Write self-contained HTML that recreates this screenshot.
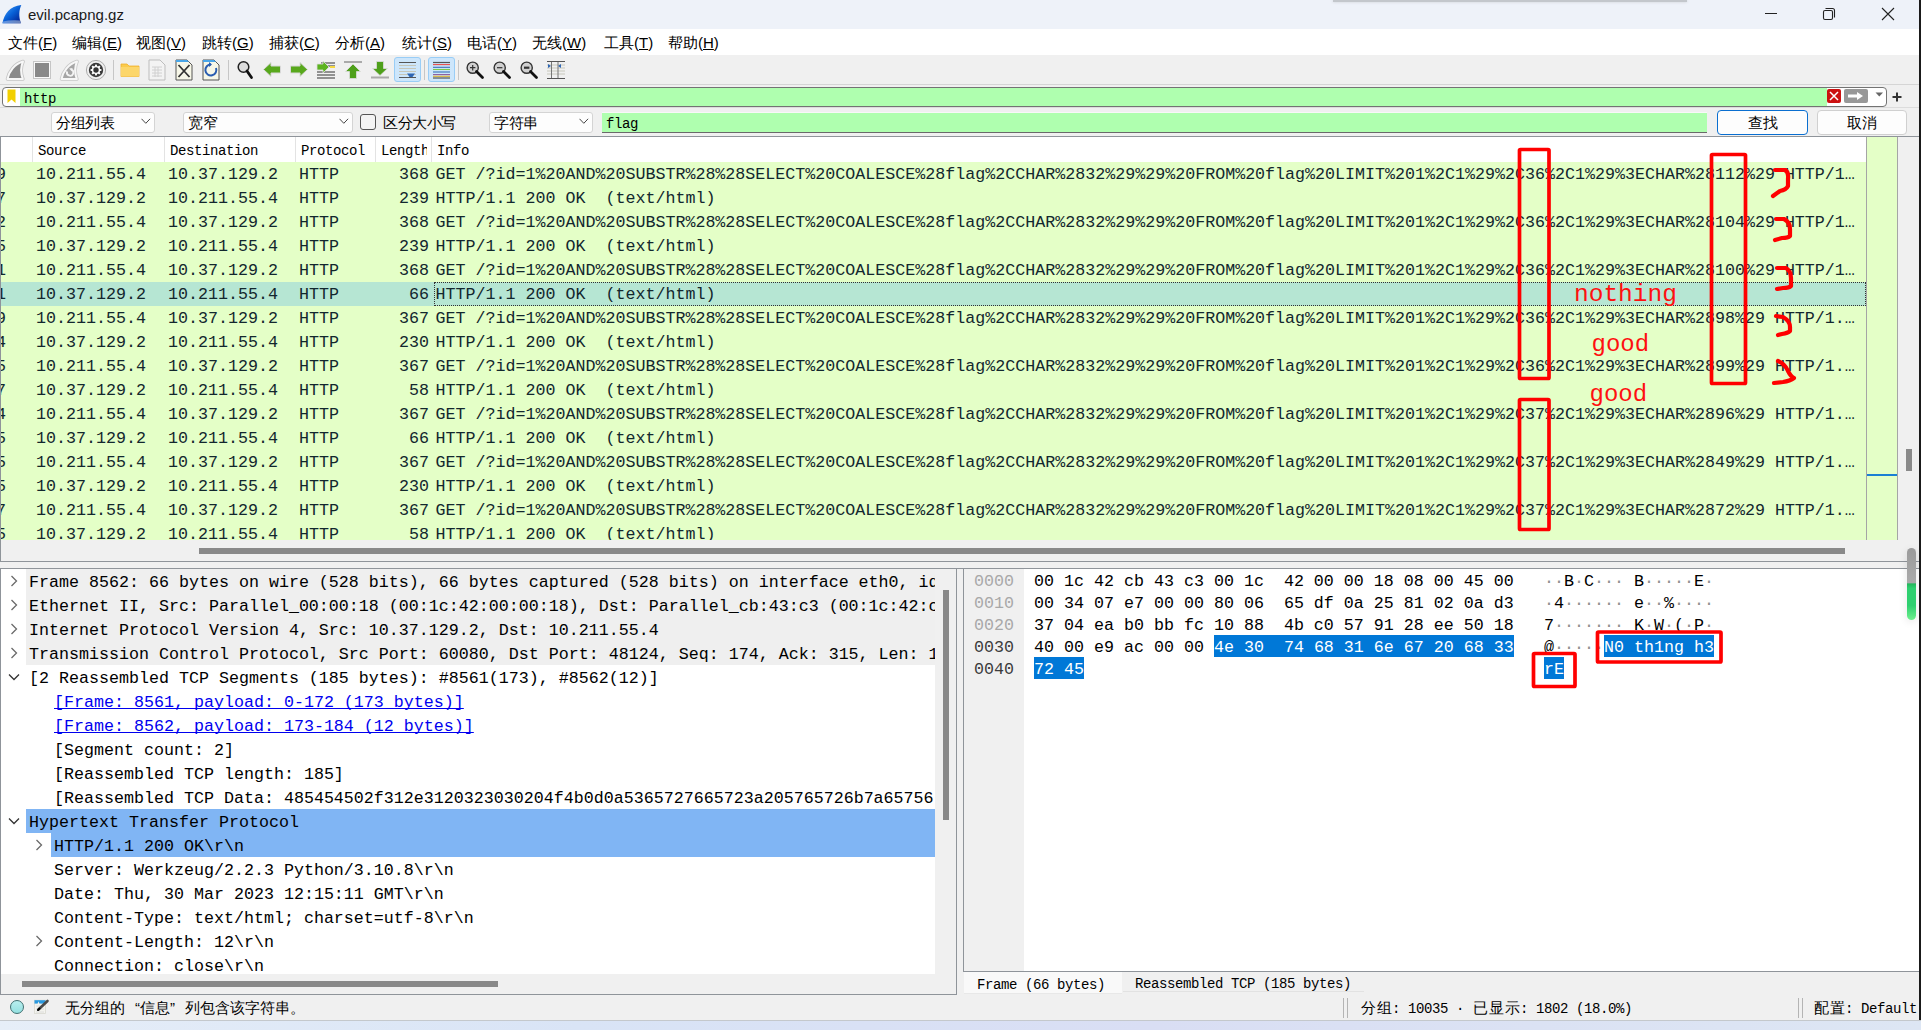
<!DOCTYPE html><html><head><meta charset="utf-8"><style>
*{box-sizing:border-box}
html,body{margin:0;padding:0}
body{width:1921px;height:1030px;position:relative;overflow:hidden;background:#f0f0f0;font-family:"Liberation Sans",sans-serif;color:#000}
.ab{position:absolute}
.m{text-decoration-skip-ink:none;font-family:"Liberation Mono",monospace;font-size:16.67px;white-space:pre;line-height:24px}
.s{font-family:"Liberation Mono",monospace;font-size:14px;letter-spacing:-0.4px;white-space:pre}
.cj{display:inline-block;width:16px;text-align:center;font-size:15px;letter-spacing:0}
.menu{font-family:"Liberation Sans",sans-serif;font-size:15px;white-space:pre}
</style></head><body>

<div class="ab" style="left:0;top:0;width:1921px;height:29px;background:#eef2f9"></div>
<div class="ab" style="left:1333px;top:0;width:354px;height:2px;background:#c3c7cc;box-shadow:0 0 3px #c8ccd0"></div>
<svg class="ab" style="left:0;top:0" width="30" height="29" viewBox="0 0 30 29">
<defs><linearGradient id="sg" x1="0.2" y1="0.1" x2="0.9" y2="0.85"><stop offset="0" stop-color="#3c92f0"/><stop offset="0.45" stop-color="#0862d8"/><stop offset="1" stop-color="#03289a"/></linearGradient>
<linearGradient id="sb" x1="0" y1="0" x2="1" y2="0"><stop offset="0" stop-color="#5e96e6"/><stop offset="1" stop-color="#6c82b8"/></linearGradient></defs>
<path d="M2.5,23.3 C4,14 10,6 21.3,5 C19,10 18.5,16 20.8,23.3 Z" fill="url(#sg)"/>
<path d="M2.9,21.6 Q10,19.8 20.3,20.6 L20.8,23.3 L2.5,23.3 Z" fill="url(#sb)"/></svg>
<div class="ab menu" style="left:28px;top:6px;font-size:15px;color:#1a1a1a">evil.pcapng.gz</div>
<div class="ab" style="left:1765px;top:13px;width:12px;height:1px;background:#222"></div>
<svg class="ab" style="left:1822px;top:7px" width="14" height="14" viewBox="0 0 14 14" fill="none" stroke="#222" stroke-width="1.1">
<rect x="1.5" y="3.5" width="9" height="9" rx="1.5"/><path d="M3.5,1.5 H10.5 Q12.5,1.5 12.5,3.5 V10.5"/></svg>
<svg class="ab" style="left:1881px;top:7px" width="14" height="14" viewBox="0 0 14 14" stroke="#222" stroke-width="1.1">
<path d="M1,1 L13,13 M13,1 L1,13"/></svg>
<div class="ab" style="left:0;top:29px;width:1919px;height:26px;background:#fff"></div>
<div class="ab menu" style="left:8px;top:34px;line-height:18px"><span class="cj" style="width:15px;text-align:center">文</span><span class="cj" style="width:15px;text-align:center">件</span>(<u>F</u>)</div>
<div class="ab menu" style="left:72px;top:34px;line-height:18px"><span class="cj" style="width:15px;text-align:center">编</span><span class="cj" style="width:15px;text-align:center">辑</span>(<u>E</u>)</div>
<div class="ab menu" style="left:136px;top:34px;line-height:18px"><span class="cj" style="width:15px;text-align:center">视</span><span class="cj" style="width:15px;text-align:center">图</span>(<u>V</u>)</div>
<div class="ab menu" style="left:202px;top:34px;line-height:18px"><span class="cj" style="width:15px;text-align:center">跳</span><span class="cj" style="width:15px;text-align:center">转</span>(<u>G</u>)</div>
<div class="ab menu" style="left:269px;top:34px;line-height:18px"><span class="cj" style="width:15px;text-align:center">捕</span><span class="cj" style="width:15px;text-align:center">获</span>(<u>C</u>)</div>
<div class="ab menu" style="left:335px;top:34px;line-height:18px"><span class="cj" style="width:15px;text-align:center">分</span><span class="cj" style="width:15px;text-align:center">析</span>(<u>A</u>)</div>
<div class="ab menu" style="left:402px;top:34px;line-height:18px"><span class="cj" style="width:15px;text-align:center">统</span><span class="cj" style="width:15px;text-align:center">计</span>(<u>S</u>)</div>
<div class="ab menu" style="left:467px;top:34px;line-height:18px"><span class="cj" style="width:15px;text-align:center">电</span><span class="cj" style="width:15px;text-align:center">话</span>(<u>Y</u>)</div>
<div class="ab menu" style="left:532px;top:34px;line-height:18px"><span class="cj" style="width:15px;text-align:center">无</span><span class="cj" style="width:15px;text-align:center">线</span>(<u>W</u>)</div>
<div class="ab menu" style="left:604px;top:34px;line-height:18px"><span class="cj" style="width:15px;text-align:center">工</span><span class="cj" style="width:15px;text-align:center">具</span>(<u>T</u>)</div>
<div class="ab menu" style="left:668px;top:34px;line-height:18px"><span class="cj" style="width:15px;text-align:center">帮</span><span class="cj" style="width:15px;text-align:center">助</span>(<u>H</u>)</div>
<div class="ab" style="left:0;top:55px;width:1919px;height:30px;background:#f0f0f0"></div>
<div class="ab" style="left:0;top:84px;width:1919px;height:1px;background:#d5d5d5"></div>
<svg class="ab" style="left:5px;top:59px" width="20" height="22" viewBox="0 0 20 22" ><path d="M2.5,20 C4,12.5 9.5,5 18,2.5 C15.8,7.5 15.3,13.5 17.8,20 Z" fill="none" stroke="#c4c4c4" stroke-width="3.6" stroke-linejoin="round"/><path d="M2.5,20 C4,12.5 9.5,5 18,2.5 C15.8,7.5 15.3,13.5 17.8,20 Z" fill="#8a8a8a" stroke="#f7f7f7" stroke-width="2" stroke-linejoin="round"/></svg>
<svg class="ab" style="left:32px;top:60px" width="20" height="20" viewBox="0 0 20 20" ><rect x="1.5" y="1.5" width="17" height="17" fill="#f8f8f8" stroke="#c6c6c6"/><rect x="3" y="3" width="14" height="14" fill="#888"/></svg>
<svg class="ab" style="left:59px;top:59px" width="20" height="22" viewBox="0 0 20 22" ><path d="M2.5,20 C4,12.5 9.5,5 18,2.5 C15.8,7.5 15.3,13.5 17.8,20 Z" fill="none" stroke="#c8c8c8" stroke-width="3.6" stroke-linejoin="round"/><path d="M2.5,20 C4,12.5 9.5,5 18,2.5 C15.8,7.5 15.3,13.5 17.8,20 Z" fill="#a6a6a6" stroke="#f7f7f7" stroke-width="2" stroke-linejoin="round"/><path d="M8.2,12.3 A3.2,3.2 0 1 0 12.5,10.6" fill="none" stroke="#f4f4f4" stroke-width="1.8"/><path d="M10.2,9.5 L13.6,9 L12.6,12.3 Z" fill="#f4f4f4"/></svg>
<svg class="ab" style="left:85px;top:59px" width="22" height="22" viewBox="0 0 22 22" ><circle cx="11" cy="11" r="9.6" fill="none" stroke="#ababab" stroke-width="1"/><circle cx="11" cy="11" r="7.2" fill="#3a3a3a"/><circle cx="11" cy="11" r="4.1" fill="#fff"/><rect x="10.05" y="5.6" width="1.9" height="2.2" fill="#fff" transform="rotate(0 11 11)"/><rect x="10.05" y="5.6" width="1.9" height="2.2" fill="#fff" transform="rotate(45 11 11)"/><rect x="10.05" y="5.6" width="1.9" height="2.2" fill="#fff" transform="rotate(90 11 11)"/><rect x="10.05" y="5.6" width="1.9" height="2.2" fill="#fff" transform="rotate(135 11 11)"/><rect x="10.05" y="5.6" width="1.9" height="2.2" fill="#fff" transform="rotate(180 11 11)"/><rect x="10.05" y="5.6" width="1.9" height="2.2" fill="#fff" transform="rotate(225 11 11)"/><rect x="10.05" y="5.6" width="1.9" height="2.2" fill="#fff" transform="rotate(270 11 11)"/><rect x="10.05" y="5.6" width="1.9" height="2.2" fill="#fff" transform="rotate(315 11 11)"/><circle cx="11" cy="11" r="2.7" fill="#333"/></svg>
<div class="ab" style="left:113px;top:60px;width:1px;height:20px;background:#c6c6c6"></div>
<div class="ab" style="left:228px;top:60px;width:1px;height:20px;background:#c6c6c6"></div>
<div class="ab" style="left:424px;top:60px;width:1px;height:20px;background:#c6c6c6"></div>
<div class="ab" style="left:458px;top:60px;width:1px;height:20px;background:#c6c6c6"></div>
<svg class="ab" style="left:120px;top:62px" width="20" height="16" viewBox="0 0 20 16" ><path d="M1,2 H7 L9,4 H19 V14.5 H1 Z" fill="#fbcb4c" stroke="#f0b030" stroke-width="0.8"/><rect x="1" y="5" width="18" height="9.5" fill="#fcd66a"/></svg>
<svg class="ab" style="left:148px;top:59px" width="18" height="22" viewBox="0 0 18 22" ><path d="M1,1 H12 L17,6 V21 H1 Z" fill="#f3f3f3" stroke="#bdbdbd"/><path d="M4,8 H14 M4,11 H14 M4,14 H14 M4,17 H14 M7,8 V18 M10,8 V18" stroke="#d0d0d0" stroke-width="1"/></svg>
<svg class="ab" style="left:175px;top:59px" width="18" height="22" viewBox="0 0 18 22" ><path d="M1,1 H12 L17,6 V21 H1 Z" fill="#f7f7e8" stroke="#555"/><path d="M1,1 H12 L14,3 H1 Z" fill="#4aa6e8"/><path d="M3.5,6 L14.5,18 M14.5,6 L3.5,18" stroke="#333" stroke-width="1.8"/></svg>
<svg class="ab" style="left:202px;top:59px" width="18" height="22" viewBox="0 0 18 22" ><path d="M1,1 H12 L17,6 V21 H1 Z" fill="#f7f7e8" stroke="#555"/><path d="M1,1 H12 L14,3 H1 Z" fill="#4aa6e8"/><path d="M9,5.5 A5.5,5.5 0 1 0 14,9" fill="none" stroke="#2a5db0" stroke-width="2"/><path d="M7,3 L10,5.5 L7,8 Z" fill="#2a5db0"/></svg>
<svg class="ab" style="left:237px;top:60px" width="17" height="20" viewBox="0 0 17 20" ><circle cx="6.5" cy="7" r="5.3" fill="#ddd" stroke="#222" stroke-width="1.5"/><path d="M10,11 L14.5,17.5" stroke="#111" stroke-width="2.8" stroke-linecap="round"/></svg>
<svg class="ab" style="left:262px;top:61px" width="20" height="17" viewBox="0 0 20 17" ><path d="M1.5,8.5 L9,1.5 V5 H18.5 V12 H9 V15.5 Z" fill="#58a81c" stroke="#d8d8d8" stroke-width="1"/></svg>
<svg class="ab" style="left:289px;top:61px" width="20" height="17" viewBox="0 0 20 17" ><path d="M18.5,8.5 L11,1.5 V5 H1.5 V12 H11 V15.5 Z" fill="#58a81c" stroke="#d8d8d8" stroke-width="1"/></svg>
<svg class="ab" style="left:315px;top:59px" width="22" height="22" viewBox="0 0 22 22" ><path d="M6,4 H20 M6,7 H20 M2,13 H20 M2,16 H20 M2,19 H20" stroke="#333" stroke-width="1.2"/><path d="M15,8 H20" stroke="#f5d742" stroke-width="2"/><path d="M14,8 L8,2 V5 H2 V11 H8 V14 Z" fill="#5cb320" stroke="#ddd" stroke-width="0.8"/></svg>
<svg class="ab" style="left:343px;top:60px" width="20" height="20" viewBox="0 0 20 20" ><rect x="1" y="1" width="18" height="2" fill="#aaa"/><path d="M10,4 L17.5,11.5 H13.5 V18.5 H6.5 V11.5 H2.5 Z" fill="#4ea01a" stroke="#ddd" stroke-width="0.8"/></svg>
<svg class="ab" style="left:370px;top:60px" width="20" height="20" viewBox="0 0 20 20" ><rect x="1" y="16.5" width="18" height="2" fill="#aaa"/><path d="M10,15.5 L17.5,8.5 H13.5 V1.5 H6.5 V8.5 H2.5 Z" fill="#4ea01a" stroke="#ddd" stroke-width="0.8"/></svg>
<div class="ab" style="left:394px;top:57px;width:27px;height:25px;background:#cde6fb;border:1px solid #99cdf6;border-radius:3px"></div>
<svg class="ab" style="left:398px;top:61px" width="19" height="18" viewBox="0 0 19 18" ><path d="M1,1.5 H18 M1,16.5 H18" stroke="#555" stroke-width="1.2"/><path d="M1,4.5 H18 M1,7.5 H18 M1,10.5 H18 M1,13.5 H18" stroke="#c6c6b8" stroke-width="1"/><path d="M9,12.5 H17 L14.5,16 H11.5 Z" fill="#2f66b3"/></svg>
<div class="ab" style="left:428px;top:57px;width:27px;height:25px;background:#cde6fb;border:1px solid #99cdf6;border-radius:3px"></div>
<svg class="ab" style="left:432px;top:61px" width="19" height="18" viewBox="0 0 19 18" ><path d="M1,1.5 H18" stroke="#555" stroke-width="1.2"/><path d="M1,3.6 H18" stroke="#e84a4a" stroke-width="1.1"/><path d="M1,6.3 H18" stroke="#3a6fb8" stroke-width="1.1"/><path d="M1,8.5 H18" stroke="#7cc84a" stroke-width="1.1"/><path d="M1,11 H18" stroke="#3a6fb8" stroke-width="1.1"/><path d="M1,13.6 H18" stroke="#8a5aa0" stroke-width="1.1"/><path d="M1,15.3 H18" stroke="#d8b030" stroke-width="1.1"/><path d="M1,17 H18" stroke="#555" stroke-width="1.2"/></svg>
<svg class="ab" style="left:466px;top:61px" width="19" height="19" viewBox="0 0 19 19" ><circle cx="6.7" cy="6.7" r="5.6" fill="#d0d0d0" stroke="#333" stroke-width="1.4"/><path d="M10.5,10.5 L16.5,16.5" stroke="#111" stroke-width="2.8" stroke-linecap="round"/><path d="M4,6.7 H9.4 M6.7,4 V9.4" stroke="#333" stroke-width="1.2"/></svg>
<svg class="ab" style="left:493px;top:61px" width="19" height="19" viewBox="0 0 19 19" ><circle cx="6.7" cy="6.7" r="5.6" fill="#d0d0d0" stroke="#333" stroke-width="1.4"/><path d="M10.5,10.5 L16.5,16.5" stroke="#111" stroke-width="2.8" stroke-linecap="round"/><path d="M4,6.7 H9.4" stroke="#333" stroke-width="1.2"/></svg>
<svg class="ab" style="left:520px;top:61px" width="19" height="19" viewBox="0 0 19 19" ><circle cx="6.7" cy="6.7" r="5.6" fill="#d0d0d0" stroke="#333" stroke-width="1.4"/><path d="M10.5,10.5 L16.5,16.5" stroke="#111" stroke-width="2.8" stroke-linecap="round"/><path d="M4,6.7 H9.4" stroke="#333" stroke-width="2.2"/></svg>
<svg class="ab" style="left:546px;top:60px" width="20" height="20" viewBox="0 0 20 20" ><path d="M1,1.5 H19 M1,18.5 H19" stroke="#555" stroke-width="1.2"/><path d="M1,5 H19 M1,8 H19 M1,11 H19 M1,14 H19" stroke="#c8c8bc" stroke-width="1"/><path d="M5.5,2 V18 M12,2 V18" stroke="#777" stroke-width="1"/><path d="M2,4 L5,6 L2,8 Z M15,4 L12,6 L15,8 Z" fill="#2f66b3"/></svg>
<div class="ab" style="left:2px;top:87px;width:1885px;height:20px;border:1px solid #737373;border-radius:4px;background:#fff;overflow:hidden"><div class="ab" style="left:17px;top:0;width:1807px;height:18px;background:#afffaf"></div></div>
<svg class="ab" style="left:7px;top:89px" width="9" height="15" viewBox="0 0 9 15" ><path d="M0.5,0.5 H8.5 V14 L4.5,10.5 L0.5,14 Z" fill="#f2cf00"/></svg>
<div class="ab s" style="left:24px;top:90px;line-height:18px">http</div>
<div class="ab" style="left:1827px;top:89px;width:14px;height:14px;background:#cc1010;border-radius:2px"></div>
<svg class="ab" style="left:1827px;top:89px" width="14" height="14" viewBox="0 0 14 14" ><path d="M3,3 L11,11 M11,3 L3,11" stroke="#fff" stroke-width="1.5"/></svg>
<div class="ab" style="left:1844px;top:89px;width:24px;height:14px;background:#989898;border-radius:2px"></div>
<svg class="ab" style="left:1844px;top:89px" width="24" height="14" viewBox="0 0 24 14" ><path d="M4,5.5 H13 V3 L19,7 L13,11 V8.5 H4 Z" fill="#fff"/></svg>
<svg class="ab" style="left:1875px;top:92px" width="9" height="6" viewBox="0 0 9 6" ><path d="M0.5,0.5 H8 L4.25,4.5 Z" fill="#666"/></svg>
<svg class="ab" style="left:1892px;top:92px" width="10" height="10" viewBox="0 0 10 10" ><path d="M5,0.5 V9.5 M0.5,5 H9.5" stroke="#333" stroke-width="2"/></svg>
<div class="ab" style="left:0;top:107px;width:1919px;height:1px;background:#dcdcdc"></div>
<div class="ab" style="left:51px;top:112px;width:104px;height:21px;background:#fdfdfd;border:1px solid #d4d4d4;border-radius:3px"></div>
<div class="ab menu" style="left:56px;top:113px;line-height:19px;font-size:15px"><span class="cj" style="width:14.5px;text-align:center">分</span><span class="cj" style="width:14.5px;text-align:center">组</span><span class="cj" style="width:14.5px;text-align:center">列</span><span class="cj" style="width:14.5px;text-align:center">表</span></div>
<svg class="ab" style="left:141px;top:118px" width="10" height="7" viewBox="0 0 10 7" ><path d="M0.5,0.8 L4.8,5.3 L9.1,0.8" fill="none" stroke="#444" stroke-width="1"/></svg>
<div class="ab" style="left:183px;top:112px;width:170px;height:21px;background:#fdfdfd;border:1px solid #d4d4d4;border-radius:3px"></div>
<div class="ab menu" style="left:188px;top:113px;line-height:19px;font-size:15px"><span class="cj" style="width:14.5px;text-align:center">宽</span><span class="cj" style="width:14.5px;text-align:center">窄</span></div>
<svg class="ab" style="left:339px;top:118px" width="10" height="7" viewBox="0 0 10 7" ><path d="M0.5,0.8 L4.8,5.3 L9.1,0.8" fill="none" stroke="#444" stroke-width="1"/></svg>
<div class="ab" style="left:360px;top:114px;width:16px;height:16px;border:1px solid #555;border-radius:3px;background:#f4f4f4"></div>
<div class="ab menu" style="left:383px;top:113px;line-height:19px;font-size:15px"><span class="cj" style="width:14.5px;text-align:center">区</span><span class="cj" style="width:14.5px;text-align:center">分</span><span class="cj" style="width:14.5px;text-align:center">大</span><span class="cj" style="width:14.5px;text-align:center">小</span><span class="cj" style="width:14.5px;text-align:center">写</span></div>
<div class="ab" style="left:489px;top:112px;width:104px;height:21px;background:#fdfdfd;border:1px solid #d4d4d4;border-radius:3px"></div>
<div class="ab menu" style="left:494px;top:113px;line-height:19px;font-size:15px"><span class="cj" style="width:14.5px;text-align:center">字</span><span class="cj" style="width:14.5px;text-align:center">符</span><span class="cj" style="width:14.5px;text-align:center">串</span></div>
<svg class="ab" style="left:579px;top:118px" width="10" height="7" viewBox="0 0 10 7" ><path d="M0.5,0.8 L4.8,5.3 L9.1,0.8" fill="none" stroke="#444" stroke-width="1"/></svg>
<div class="ab" style="left:602px;top:112px;width:1105px;height:21px;background:#afffaf;border-bottom:1px solid #6a6a6a;border-top:1px solid #f8f8f8"></div>
<div class="ab s" style="left:606px;top:115px;line-height:19px">flag</div>
<div class="ab" style="left:1717px;top:110px;width:91px;height:25px;background:#fdfdfd;border:1px solid #0a6fd0;border-radius:4px"></div>
<div class="ab menu" style="left:1717px;top:113px;width:91px;text-align:center;line-height:19px;font-size:15px"><span class="cj" style="width:15px;text-align:center">查</span><span class="cj" style="width:15px;text-align:center">找</span></div>
<div class="ab" style="left:1817px;top:110px;width:90px;height:25px;background:#fdfdfd;border:1px solid #d0d0d0;border-radius:4px"></div>
<div class="ab menu" style="left:1817px;top:113px;width:90px;text-align:center;line-height:19px;font-size:15px"><span class="cj" style="width:15px;text-align:center">取</span><span class="cj" style="width:15px;text-align:center">消</span></div>
<div class="ab" style="left:0;top:136px;width:1919px;height:1px;background:#8f949a"></div>
<div class="ab" style="left:0;top:136px;width:1px;height:425px;background:#8f949a"></div>
<div class="ab" style="left:1px;top:137px;width:1865px;height:25px;background:#fff"></div>
<div class="ab" style="left:32px;top:137px;width:1px;height:25px;background:#e3e3e3"></div>
<div class="ab" style="left:164px;top:137px;width:1px;height:25px;background:#e3e3e3"></div>
<div class="ab" style="left:295px;top:137px;width:1px;height:25px;background:#e3e3e3"></div>
<div class="ab" style="left:375px;top:137px;width:1px;height:25px;background:#e3e3e3"></div>
<div class="ab" style="left:431px;top:137px;width:1px;height:25px;background:#e3e3e3"></div>
<div class="ab s" style="left:38px;top:142px;line-height:18px;width:120px;overflow:hidden">Source</div>
<div class="ab s" style="left:170px;top:142px;line-height:18px;width:120px;overflow:hidden">Destination</div>
<div class="ab s" style="left:301px;top:142px;line-height:18px;width:70px;overflow:hidden">Protocol</div>
<div class="ab s" style="left:381px;top:142px;line-height:18px;width:46px;overflow:hidden">Length</div>
<div class="ab s" style="left:437px;top:142px;line-height:18px;width:100px;overflow:hidden">Info</div>
<div class="ab" style="left:1px;top:162px;width:1865px;height:378px;background:#e4ffc7;overflow:hidden">
<div class="ab m" style="left:-5px;top:1px;color:#12272e">9</div>
<div class="ab m" style="left:35px;top:1px;color:#12272e">10.211.55.4</div>
<div class="ab m" style="left:167px;top:1px;color:#12272e">10.37.129.2</div>
<div class="ab m" style="left:298px;top:1px;color:#12272e">HTTP</div>
<div class="ab m" style="left:398px;top:1px;color:#12272e">368</div>
<div class="ab m" style="left:434.5px;top:1px;color:#12272e">GET /?id=1%20AND%20SUBSTR%28%28SELECT%20COALESCE%28flag%2CCHAR%2832%29%29%20FROM%20flag%20LIMIT%201%2C1%29%2C36%2C1%29%3ECHAR%28112%29 HTTP/1…</div>
<div class="ab m" style="left:-5px;top:25px;color:#12272e">7</div>
<div class="ab m" style="left:35px;top:25px;color:#12272e">10.37.129.2</div>
<div class="ab m" style="left:167px;top:25px;color:#12272e">10.211.55.4</div>
<div class="ab m" style="left:298px;top:25px;color:#12272e">HTTP</div>
<div class="ab m" style="left:398px;top:25px;color:#12272e">239</div>
<div class="ab m" style="left:434.5px;top:25px;color:#12272e">HTTP/1.1 200 OK  (text/html)</div>
<div class="ab m" style="left:-5px;top:49px;color:#12272e">2</div>
<div class="ab m" style="left:35px;top:49px;color:#12272e">10.211.55.4</div>
<div class="ab m" style="left:167px;top:49px;color:#12272e">10.37.129.2</div>
<div class="ab m" style="left:298px;top:49px;color:#12272e">HTTP</div>
<div class="ab m" style="left:398px;top:49px;color:#12272e">368</div>
<div class="ab m" style="left:434.5px;top:49px;color:#12272e">GET /?id=1%20AND%20SUBSTR%28%28SELECT%20COALESCE%28flag%2CCHAR%2832%29%29%20FROM%20flag%20LIMIT%201%2C1%29%2C36%2C1%29%3ECHAR%28104%29 HTTP/1…</div>
<div class="ab m" style="left:-5px;top:73px;color:#12272e">5</div>
<div class="ab m" style="left:35px;top:73px;color:#12272e">10.37.129.2</div>
<div class="ab m" style="left:167px;top:73px;color:#12272e">10.211.55.4</div>
<div class="ab m" style="left:298px;top:73px;color:#12272e">HTTP</div>
<div class="ab m" style="left:398px;top:73px;color:#12272e">239</div>
<div class="ab m" style="left:434.5px;top:73px;color:#12272e">HTTP/1.1 200 OK  (text/html)</div>
<div class="ab m" style="left:-5px;top:97px;color:#12272e">1</div>
<div class="ab m" style="left:35px;top:97px;color:#12272e">10.211.55.4</div>
<div class="ab m" style="left:167px;top:97px;color:#12272e">10.37.129.2</div>
<div class="ab m" style="left:298px;top:97px;color:#12272e">HTTP</div>
<div class="ab m" style="left:398px;top:97px;color:#12272e">368</div>
<div class="ab m" style="left:434.5px;top:97px;color:#12272e">GET /?id=1%20AND%20SUBSTR%28%28SELECT%20COALESCE%28flag%2CCHAR%2832%29%29%20FROM%20flag%20LIMIT%201%2C1%29%2C36%2C1%29%3ECHAR%28100%29 HTTP/1…</div>
<div class="ab" style="left:0;top:120px;width:1865px;height:24px;background:#b6e6d3"></div>
<div class="ab" style="left:433px;top:120px;width:1432px;height:24px;border:1px dotted #333"></div>
<div class="ab m" style="left:-5px;top:121px;color:#12272e">1</div>
<div class="ab m" style="left:35px;top:121px;color:#12272e">10.37.129.2</div>
<div class="ab m" style="left:167px;top:121px;color:#12272e">10.211.55.4</div>
<div class="ab m" style="left:298px;top:121px;color:#12272e">HTTP</div>
<div class="ab m" style="left:408px;top:121px;color:#12272e">66</div>
<div class="ab m" style="left:434.5px;top:121px;color:#12272e">HTTP/1.1 200 OK  (text/html)</div>
<div class="ab m" style="left:-5px;top:145px;color:#12272e">9</div>
<div class="ab m" style="left:35px;top:145px;color:#12272e">10.211.55.4</div>
<div class="ab m" style="left:167px;top:145px;color:#12272e">10.37.129.2</div>
<div class="ab m" style="left:298px;top:145px;color:#12272e">HTTP</div>
<div class="ab m" style="left:398px;top:145px;color:#12272e">367</div>
<div class="ab m" style="left:434.5px;top:145px;color:#12272e">GET /?id=1%20AND%20SUBSTR%28%28SELECT%20COALESCE%28flag%2CCHAR%2832%29%29%20FROM%20flag%20LIMIT%201%2C1%29%2C36%2C1%29%3ECHAR%2898%29 HTTP/1.…</div>
<div class="ab m" style="left:-5px;top:169px;color:#12272e">4</div>
<div class="ab m" style="left:35px;top:169px;color:#12272e">10.37.129.2</div>
<div class="ab m" style="left:167px;top:169px;color:#12272e">10.211.55.4</div>
<div class="ab m" style="left:298px;top:169px;color:#12272e">HTTP</div>
<div class="ab m" style="left:398px;top:169px;color:#12272e">230</div>
<div class="ab m" style="left:434.5px;top:169px;color:#12272e">HTTP/1.1 200 OK  (text/html)</div>
<div class="ab m" style="left:-5px;top:193px;color:#12272e">5</div>
<div class="ab m" style="left:35px;top:193px;color:#12272e">10.211.55.4</div>
<div class="ab m" style="left:167px;top:193px;color:#12272e">10.37.129.2</div>
<div class="ab m" style="left:298px;top:193px;color:#12272e">HTTP</div>
<div class="ab m" style="left:398px;top:193px;color:#12272e">367</div>
<div class="ab m" style="left:434.5px;top:193px;color:#12272e">GET /?id=1%20AND%20SUBSTR%28%28SELECT%20COALESCE%28flag%2CCHAR%2832%29%29%20FROM%20flag%20LIMIT%201%2C1%29%2C36%2C1%29%3ECHAR%2899%29 HTTP/1.…</div>
<div class="ab m" style="left:-5px;top:217px;color:#12272e">7</div>
<div class="ab m" style="left:35px;top:217px;color:#12272e">10.37.129.2</div>
<div class="ab m" style="left:167px;top:217px;color:#12272e">10.211.55.4</div>
<div class="ab m" style="left:298px;top:217px;color:#12272e">HTTP</div>
<div class="ab m" style="left:408px;top:217px;color:#12272e">58</div>
<div class="ab m" style="left:434.5px;top:217px;color:#12272e">HTTP/1.1 200 OK  (text/html)</div>
<div class="ab m" style="left:-5px;top:241px;color:#12272e">4</div>
<div class="ab m" style="left:35px;top:241px;color:#12272e">10.211.55.4</div>
<div class="ab m" style="left:167px;top:241px;color:#12272e">10.37.129.2</div>
<div class="ab m" style="left:298px;top:241px;color:#12272e">HTTP</div>
<div class="ab m" style="left:398px;top:241px;color:#12272e">367</div>
<div class="ab m" style="left:434.5px;top:241px;color:#12272e">GET /?id=1%20AND%20SUBSTR%28%28SELECT%20COALESCE%28flag%2CCHAR%2832%29%29%20FROM%20flag%20LIMIT%201%2C1%29%2C37%2C1%29%3ECHAR%2896%29 HTTP/1.…</div>
<div class="ab m" style="left:-5px;top:265px;color:#12272e">5</div>
<div class="ab m" style="left:35px;top:265px;color:#12272e">10.37.129.2</div>
<div class="ab m" style="left:167px;top:265px;color:#12272e">10.211.55.4</div>
<div class="ab m" style="left:298px;top:265px;color:#12272e">HTTP</div>
<div class="ab m" style="left:408px;top:265px;color:#12272e">66</div>
<div class="ab m" style="left:434.5px;top:265px;color:#12272e">HTTP/1.1 200 OK  (text/html)</div>
<div class="ab m" style="left:-5px;top:289px;color:#12272e">5</div>
<div class="ab m" style="left:35px;top:289px;color:#12272e">10.211.55.4</div>
<div class="ab m" style="left:167px;top:289px;color:#12272e">10.37.129.2</div>
<div class="ab m" style="left:298px;top:289px;color:#12272e">HTTP</div>
<div class="ab m" style="left:398px;top:289px;color:#12272e">367</div>
<div class="ab m" style="left:434.5px;top:289px;color:#12272e">GET /?id=1%20AND%20SUBSTR%28%28SELECT%20COALESCE%28flag%2CCHAR%2832%29%29%20FROM%20flag%20LIMIT%201%2C1%29%2C37%2C1%29%3ECHAR%2849%29 HTTP/1.…</div>
<div class="ab m" style="left:-5px;top:313px;color:#12272e">5</div>
<div class="ab m" style="left:35px;top:313px;color:#12272e">10.37.129.2</div>
<div class="ab m" style="left:167px;top:313px;color:#12272e">10.211.55.4</div>
<div class="ab m" style="left:298px;top:313px;color:#12272e">HTTP</div>
<div class="ab m" style="left:398px;top:313px;color:#12272e">230</div>
<div class="ab m" style="left:434.5px;top:313px;color:#12272e">HTTP/1.1 200 OK  (text/html)</div>
<div class="ab m" style="left:-5px;top:337px;color:#12272e">7</div>
<div class="ab m" style="left:35px;top:337px;color:#12272e">10.211.55.4</div>
<div class="ab m" style="left:167px;top:337px;color:#12272e">10.37.129.2</div>
<div class="ab m" style="left:298px;top:337px;color:#12272e">HTTP</div>
<div class="ab m" style="left:398px;top:337px;color:#12272e">367</div>
<div class="ab m" style="left:434.5px;top:337px;color:#12272e">GET /?id=1%20AND%20SUBSTR%28%28SELECT%20COALESCE%28flag%2CCHAR%2832%29%29%20FROM%20flag%20LIMIT%201%2C1%29%2C37%2C1%29%3ECHAR%2872%29 HTTP/1.…</div>
<div class="ab m" style="left:-5px;top:361px;color:#12272e">5</div>
<div class="ab m" style="left:35px;top:361px;color:#12272e">10.37.129.2</div>
<div class="ab m" style="left:167px;top:361px;color:#12272e">10.211.55.4</div>
<div class="ab m" style="left:298px;top:361px;color:#12272e">HTTP</div>
<div class="ab m" style="left:408px;top:361px;color:#12272e">58</div>
<div class="ab m" style="left:434.5px;top:361px;color:#12272e">HTTP/1.1 200 OK  (text/html)</div>
</div>
<div class="ab" style="left:1866px;top:137px;width:32px;height:403px;background:#e4ffc7;border-left:1px solid #a5a5a5;border-right:1px solid #a5a5a5"></div>
<div class="ab" style="left:1867px;top:474px;width:30px;height:2px;background:#1a7fd4"></div>
<div class="ab" style="left:1898px;top:137px;width:21px;height:403px;background:#f0f0f0"></div>
<div class="ab" style="left:1906px;top:449px;width:6px;height:22px;background:#898989"></div>
<div class="ab" style="left:1px;top:540px;width:1918px;height:21px;background:#f0f0f0"></div>
<div class="ab" style="left:199px;top:548px;width:1646px;height:6px;background:#898989"></div>
<div class="ab" style="left:0;top:561px;width:1919px;height:1px;background:#8f949a"></div>
<div class="ab" style="left:0;top:568px;width:1919px;height:1px;background:#8f949a"></div>
<div class="ab" style="left:0;top:568px;width:957px;height:427px;border:1px solid #8f949a;background:#f0f0f0"></div>
<div class="ab" style="left:1px;top:569px;width:934px;height:405px;background:#fff;overflow:hidden">
<div class="ab" style="left:25px;top:0;width:909px;height:96px;background:#efefef"></div>
<div class="ab" style="left:25px;top:240px;width:909px;height:24px;background:#80b5f4"></div>
<div class="ab" style="left:50px;top:264px;width:884px;height:24px;background:#80b5f4"></div>
<svg class="ab" style="left:8px;top:6px" width="12" height="12" viewBox="0 0 12 12"><path d="M2.5,1 L7.5,6 L2.5,11" fill="none" stroke="#6a6a6a" stroke-width="1.3"/></svg>
<div class="ab m" style="left:28px;top:1.5px;color:#000">Frame 8562: 66 bytes on wire (528 bits), 66 bytes captured (528 bits) on interface eth0, id 0</div>
<svg class="ab" style="left:8px;top:30px" width="12" height="12" viewBox="0 0 12 12"><path d="M2.5,1 L7.5,6 L2.5,11" fill="none" stroke="#6a6a6a" stroke-width="1.3"/></svg>
<div class="ab m" style="left:28px;top:25.5px;color:#000">Ethernet II, Src: Parallel_00:00:18 (00:1c:42:00:00:18), Dst: Parallel_cb:43:c3 (00:1c:42:cb:43:c3)</div>
<svg class="ab" style="left:8px;top:54px" width="12" height="12" viewBox="0 0 12 12"><path d="M2.5,1 L7.5,6 L2.5,11" fill="none" stroke="#6a6a6a" stroke-width="1.3"/></svg>
<div class="ab m" style="left:28px;top:49.5px;color:#000">Internet Protocol Version 4, Src: 10.37.129.2, Dst: 10.211.55.4</div>
<svg class="ab" style="left:8px;top:78px" width="12" height="12" viewBox="0 0 12 12"><path d="M2.5,1 L7.5,6 L2.5,11" fill="none" stroke="#6a6a6a" stroke-width="1.3"/></svg>
<div class="ab m" style="left:28px;top:73.5px;color:#000">Transmission Control Protocol, Src Port: 60080, Dst Port: 48124, Seq: 174, Ack: 315, Len: 12</div>
<svg class="ab" style="left:7px;top:102px" width="12" height="12" viewBox="0 0 12 12"><path d="M1,3.5 L6,8.5 L11,3.5" fill="none" stroke="#333" stroke-width="1.3"/></svg>
<div class="ab m" style="left:28px;top:97.5px;color:#000">[2 Reassembled TCP Segments (185 bytes): #8561(173), #8562(12)]</div>
<div class="ab m" style="left:53px;top:121.5px;color:#0000ee;text-decoration:underline">[Frame: 8561, payload: 0-172 (173 bytes)]</div>
<div class="ab m" style="left:53px;top:145.5px;color:#0000ee;text-decoration:underline">[Frame: 8562, payload: 173-184 (12 bytes)]</div>
<div class="ab m" style="left:53px;top:169.5px;color:#000">[Segment count: 2]</div>
<div class="ab m" style="left:53px;top:193.5px;color:#000">[Reassembled TCP length: 185]</div>
<div class="ab m" style="left:53px;top:217.5px;color:#000">[Reassembled TCP Data: 485454502f312e3120323030204f4b0d0a5365727665723a205765726b7a65756</div>
<svg class="ab" style="left:7px;top:246px" width="12" height="12" viewBox="0 0 12 12"><path d="M1,3.5 L6,8.5 L11,3.5" fill="none" stroke="#333" stroke-width="1.3"/></svg>
<div class="ab m" style="left:28px;top:241.5px;color:#000">Hypertext Transfer Protocol</div>
<svg class="ab" style="left:33px;top:270px" width="12" height="12" viewBox="0 0 12 12"><path d="M2.5,1 L7.5,6 L2.5,11" fill="none" stroke="#6a6a6a" stroke-width="1.3"/></svg>
<div class="ab m" style="left:53px;top:265.5px;color:#000">HTTP/1.1 200 OK\r\n</div>
<div class="ab m" style="left:53px;top:289.5px;color:#000">Server: Werkzeug/2.2.3 Python/3.10.8\r\n</div>
<div class="ab m" style="left:53px;top:313.5px;color:#000">Date: Thu, 30 Mar 2023 12:15:11 GMT\r\n</div>
<div class="ab m" style="left:53px;top:337.5px;color:#000">Content-Type: text/html; charset=utf-8\r\n</div>
<svg class="ab" style="left:33px;top:366px" width="12" height="12" viewBox="0 0 12 12"><path d="M2.5,1 L7.5,6 L2.5,11" fill="none" stroke="#6a6a6a" stroke-width="1.3"/></svg>
<div class="ab m" style="left:53px;top:361.5px;color:#000">Content-Length: 12\r\n</div>
<div class="ab m" style="left:53px;top:385.5px;color:#000">Connection: close\r\n</div>
</div>
<div class="ab" style="left:943px;top:590px;width:6px;height:230px;background:#898989"></div>
<div class="ab" style="left:22px;top:981px;width:476px;height:6px;background:#898989"></div>
<div class="ab" style="left:963px;top:568px;width:956px;height:404px;border:1px solid #8f949a;border-right:none;background:#fff"></div>
<div class="ab" style="left:964px;top:569px;width:60px;height:402px;background:#f0f0f0"></div>
<div class="ab m" style="left:974px;top:570.5px;line-height:22px;color:#a8a8a8">0000</div>
<div class="ab m" style="left:974px;top:592.5px;line-height:22px;color:#a8a8a8">0010</div>
<div class="ab m" style="left:974px;top:614.5px;line-height:22px;color:#a8a8a8">0020</div>
<div class="ab m" style="left:974px;top:636.5px;line-height:22px;color:#3c3c3c">0030</div>
<div class="ab m" style="left:974px;top:658.5px;line-height:22px;color:#3c3c3c">0040</div>
<div class="ab" style="left:1214px;top:635px;width:300px;height:22px;background:#0078d7"></div>
<div class="ab" style="left:1034px;top:657px;width:50px;height:22px;background:#0078d7"></div>
<div class="ab" style="left:1604px;top:635px;width:110px;height:22px;background:#0078d7"></div>
<div class="ab" style="left:1544px;top:657px;width:20px;height:22px;background:#0078d7"></div>
<div class="ab m" style="left:1034px;top:570.5px;line-height:22px">00 1c 42 cb 43 c3 00 1c  42 00 00 18 08 00 45 00</div>
<div class="ab m" style="left:1544px;top:570.5px;line-height:22px"><span style="color:#909090">·</span><span style="color:#909090">·</span>B<span style="color:#909090">·</span>C<span style="color:#909090">·</span><span style="color:#909090">·</span><span style="color:#909090">·</span> B<span style="color:#909090">·</span><span style="color:#909090">·</span><span style="color:#909090">·</span><span style="color:#909090">·</span><span style="color:#909090">·</span>E<span style="color:#909090">·</span></div>
<div class="ab m" style="left:1034px;top:592.5px;line-height:22px">00 34 07 e7 00 00 80 06  65 df 0a 25 81 02 0a d3</div>
<div class="ab m" style="left:1544px;top:592.5px;line-height:22px"><span style="color:#909090">·</span>4<span style="color:#909090">·</span><span style="color:#909090">·</span><span style="color:#909090">·</span><span style="color:#909090">·</span><span style="color:#909090">·</span><span style="color:#909090">·</span> e<span style="color:#909090">·</span><span style="color:#909090">·</span>%<span style="color:#909090">·</span><span style="color:#909090">·</span><span style="color:#909090">·</span><span style="color:#909090">·</span></div>
<div class="ab m" style="left:1034px;top:614.5px;line-height:22px">37 04 ea b0 bb fc 10 88  4b c0 57 91 28 ee 50 18</div>
<div class="ab m" style="left:1544px;top:614.5px;line-height:22px">7<span style="color:#909090">·</span><span style="color:#909090">·</span><span style="color:#909090">·</span><span style="color:#909090">·</span><span style="color:#909090">·</span><span style="color:#909090">·</span><span style="color:#909090">·</span> K<span style="color:#909090">·</span>W<span style="color:#909090">·</span>(<span style="color:#909090">·</span>P<span style="color:#909090">·</span></div>
<div class="ab m" style="left:1034px;top:636.5px;line-height:22px">40 00 e9 ac 00 00 <span style="color:#fff">4e 30  74 68 31 6e 67 20 68 33</span></div>
<div class="ab m" style="left:1544px;top:636.5px;line-height:22px"><span style="color:#000">@</span><span style="color:#909090">·····</span><span style="color:#fff">N0 th1ng h3</span></div>
<div class="ab m" style="left:1034px;top:658.5px;line-height:22px;color:#fff">72 45</div>
<div class="ab m" style="left:1544px;top:658.5px;line-height:22px;color:#fff">rE</div>
<div class="ab" style="left:1907px;top:548px;width:9px;height:72px;border-radius:5px;box-shadow:0 2px 8px rgba(0,0,0,0.10);background:linear-gradient(#9a9a9a,#aaa 48%,#23b85c 50%,#2fd070 56%,#2fd070 80%,#6ff08e)"></div>
<div class="ab" style="left:964px;top:972px;width:158px;height:22px;background:#f9f9f9;border-bottom:1px solid #e8e8e8"></div>
<div class="ab s" style="left:977px;top:976px;line-height:18px">Frame (66 bytes)</div>
<div class="ab" style="left:1123px;top:972px;width:241px;height:20px;background:#f0f0f0;border-bottom:1px solid #e2e2e2"></div>
<div class="ab s" style="left:1135px;top:975px;line-height:18px">Reassembled TCP (185 bytes)</div>
<div class="ab" style="left:0;top:995px;width:1919px;height:25px;background:#f0f0f0"></div>
<div class="ab" style="left:10px;top:1000px;width:14px;height:14px;border-radius:50%;background:linear-gradient(#b8eeee,#94e0e0);border:1px solid #3f6f70"></div>
<svg class="ab" style="left:34px;top:999px" width="16" height="16" viewBox="0 0 16 16" ><rect x="0.5" y="1.2" width="11" height="13.3" fill="#f3f3ee" stroke="#d8d8d0" stroke-width="0.8"/><rect x="0.5" y="1.2" width="11" height="3.4" fill="#2a98de"/><path d="M3.5,5 L4.5,2.2 L5.5,5 Z" fill="#f3f3ee"/><path d="M2,7 H10 M2,10 H10 M2,13 H10" stroke="#d6d6d6" stroke-width="0.8"/><path d="M4.5,10.5 L13.5,2" stroke="#4a4a4a" stroke-width="2.6" stroke-linecap="round"/><path d="M4,11 L5.5,9.5" stroke="#000" stroke-width="2" stroke-linecap="round"/></svg>
<div class="ab menu" style="left:65px;top:998px;line-height:19px;font-size:15px"><span class="cj" style="width:15px;text-align:center">无</span><span class="cj" style="width:15px;text-align:center">分</span><span class="cj" style="width:15px;text-align:center">组</span><span class="cj" style="width:15px;text-align:center">的</span><span class="cj" style="width:15px;text-align:right">“</span><span class="cj" style="width:15px;text-align:center">信</span><span class="cj" style="width:15px;text-align:center">息</span><span class="cj" style="width:15px;text-align:left">”</span><span class="cj" style="width:15px;text-align:center">列</span><span class="cj" style="width:15px;text-align:center">包</span><span class="cj" style="width:15px;text-align:center">含</span><span class="cj" style="width:15px;text-align:center">该</span><span class="cj" style="width:15px;text-align:center">字</span><span class="cj" style="width:15px;text-align:center">符</span><span class="cj" style="width:15px;text-align:center">串</span><span class="cj" style="width:15px;text-align:center">。</span></div>
<div class="ab" style="left:1343px;top:998px;width:1px;height:20px;background:#b4b4b4"></div>
<div class="ab" style="left:1347px;top:998px;width:1px;height:20px;background:#b4b4b4"></div>
<div class="ab" style="left:1798px;top:998px;width:1px;height:20px;background:#b4b4b4"></div>
<div class="ab" style="left:1802px;top:998px;width:1px;height:20px;background:#b4b4b4"></div>
<div class="ab s" style="left:1360px;top:1000px;line-height:19px"><span class="cj" style="width:16px;text-align:center">分</span><span class="cj" style="width:16px;text-align:center">组</span>: 10035 · <span class="cj" style="width:16px;text-align:center">已</span><span class="cj" style="width:16px;text-align:center">显</span><span class="cj" style="width:16px;text-align:center">示</span>: 1802 (18.0%)</div>
<div class="ab s" style="left:1813px;top:1000px;line-height:19px"><span class="cj" style="width:16px;text-align:center">配</span><span class="cj" style="width:16px;text-align:center">置</span>: Default</div>
<div class="ab" style="left:0;top:1020px;width:1921px;height:10px;background:linear-gradient(90deg,#e6eef8,#d9e4f6 30%,#d9def4 60%,#dde6f4);border-top:1px solid #c4c8cc"></div>
<div class="ab" style="left:1919px;top:0;width:2px;height:1020px;background:#1a1a1a"></div>
<svg class="ab" style="left:0;top:0" width="1921" height="1030" viewBox="0 0 1921 1030" fill="none" stroke="#ff0000" stroke-width="3.7" stroke-linecap="round" stroke-linejoin="round">
<rect x="1519.5" y="149.5" width="29.5" height="229.0" rx="1"/>
<rect x="1711.5" y="154.5" width="34.0" height="229.0" rx="1"/>
<rect x="1519.5" y="399.5" width="29.5" height="130.0" rx="1"/>
<rect x="1597.5" y="632" width="123.5" height="30" rx="1"/>
<rect x="1533.5" y="653.5" width="41.5" height="33.0" rx="1"/>
<path d="M1775,170 L1785,170 Q1789,172 1788,179 L1788,186 Q1786,190 1780,191 L1773,196" stroke-width="4.2"/>
<path d="M1776,219 L1784,219 Q1790,222 1790,229 L1790,236 Q1788,238 1782,238 L1775,240" stroke-width="4.2"/>
<path d="M1777,268 L1786,268 Q1791,271 1791,278 L1791,286 Q1789,288 1783,288 L1777,289" stroke-width="4.2"/>
<path d="M1776,316 L1783,317 Q1790,321 1790,327 L1790,331 Q1788,333 1782,334 L1778,335" stroke-width="4.2"/>
<path d="M1778,361 Q1785,364 1788,371 Q1791,377 1794,378 Q1790,381 1783,382 L1774,383" stroke-width="4.2"/>
</svg>
<div class="ab" style="left:1574px;top:279.5px;font-family:'Liberation Mono',monospace;font-size:24.5px;color:#ff1010;line-height:30px">nothing</div>
<div class="ab" style="left:1591.5px;top:330px;font-family:'Liberation Mono',monospace;font-size:24px;color:#ff1010;line-height:30px">good</div>
<div class="ab" style="left:1589.5px;top:380px;font-family:'Liberation Mono',monospace;font-size:24px;color:#ff1010;line-height:30px">good</div>
</body></html>
